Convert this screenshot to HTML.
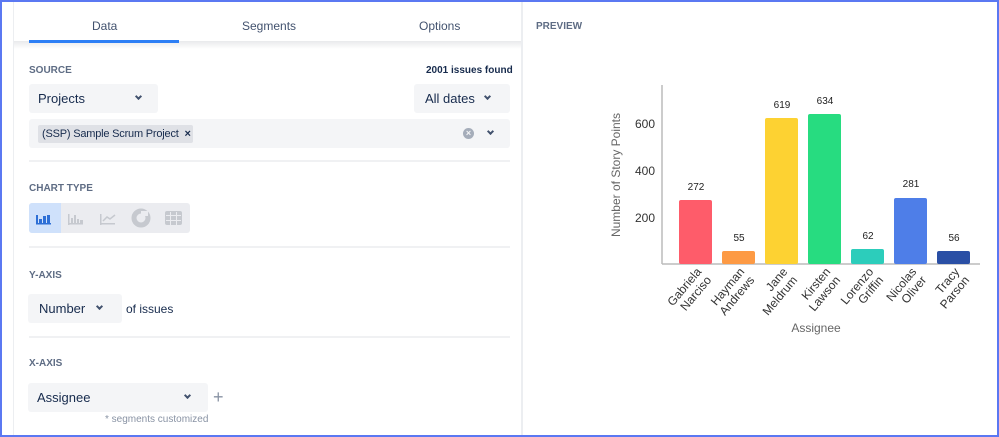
<!DOCTYPE html>
<html><head><style>
*{box-sizing:border-box;margin:0;padding:0}
body{width:999px;height:437px;overflow:hidden;background:#fff;font-family:"Liberation Sans",sans-serif;color:#172b4d;position:relative}
.frame{position:absolute;left:0;top:0;width:999px;height:437px;border:2px solid #5b78f2;z-index:10;pointer-events:none}
.a{position:absolute}
.lbl{font-size:10px;font-weight:bold;color:#5e6c84}
.sel{background:#f4f5f7;border-radius:3px;font-size:13px;color:#172b4d}
.chev{position:absolute;width:6px;height:6px;border-right:2px solid #42526e;border-bottom:2px solid #42526e;transform:rotate(45deg)}
.hr{position:absolute;left:29px;width:481px;height:2px;background:#f0f1f3}
</style></head><body>
<div class="frame"></div>
<div class="a" style="left:13px;top:0;width:1px;height:437px;background:#eceef1"></div>
<div class="a" style="left:521px;top:0;width:2px;height:437px;background:#eceef1"></div>
<div class="a" style="left:14px;top:41px;width:507px;height:8px;background:linear-gradient(#e9eaec,#fff)"></div>
<div class="a" style="left:29px;top:40px;width:150px;height:3px;background:#2d7ff5"></div>
<div class="a" style="left:92px;top:19px;font-size:12px;color:#42526e">Data</div>
<div class="a" style="left:242px;top:19px;font-size:12px;color:#42526e">Segments</div>
<div class="a" style="left:419px;top:19px;font-size:12px;color:#42526e">Options</div>
<div class="a lbl" style="left:29px;top:65px">SOURCE</div>
<div class="a" style="left:426px;top:65px;font-size:10px;font-weight:bold;color:#172b4d">2001 issues found</div>
<div class="a sel" style="left:29px;top:84px;width:129px;height:29px"><span class="a" style="left:9px;top:7px">Projects</span><i class="chev" style="left:107px;top:10px;width:5px;height:5px"></i></div>
<div class="a sel" style="left:414px;top:84px;width:96px;height:29px"><span class="a" style="left:11px;top:7px">All dates</span><i class="chev" style="left:71px;top:10px;width:5px;height:5px"></i></div>
<div class="a sel" style="left:29px;top:119px;width:481px;height:29px">
 <div class="a" style="left:9px;top:6px;width:155px;height:18px;background:#dfe1e6;border-radius:2px;font-size:11px;padding:3px 4px;white-space:nowrap;letter-spacing:-0.2px">(SSP) Sample Scrum Project <b style="margin-left:3px">×</b></div>
 <div class="a" style="left:434px;top:9px;width:11px;height:11px;border-radius:50%;background:#a5adba;color:#f4f5f7;font-size:9px;line-height:11px;text-align:center;font-weight:bold">×</div>
 <i class="chev" style="left:459px;top:10px;width:5px;height:5px"></i>
</div>
<div class="hr" style="top:160px"></div>
<div class="a lbl" style="left:29px;top:183px">CHART TYPE</div>
<div class="a" style="left:29px;top:203px;width:161px;height:30px;background:#ebecf0;border-radius:3px"></div>
<div class="a" style="left:29px;top:203px;width:32px;height:30px;background:#cfe1fb;border-radius:3px 0 0 3px"></div>
<svg class="a" style="left:29px;top:203px" width="161" height="30">
<g fill="#2d6fd6"><rect x="7" y="12" width="2" height="9"/><rect x="10" y="16" width="3" height="4"/><rect x="14" y="13" width="3" height="7"/><rect x="18" y="12" width="3" height="8"/><rect x="7" y="20" width="15" height="1.5"/></g>
<g fill="#c6c9cf"><rect x="39" y="11" width="1.5" height="11"/><rect x="39" y="20" width="15" height="1.5"/><rect x="42" y="15" width="2" height="5"/><rect x="45" y="12" width="2" height="8"/><rect x="48" y="16" width="2" height="4"/><rect x="51" y="17" width="3" height="3"/>
<rect x="71" y="11" width="1.5" height="11"/><rect x="71" y="20" width="15" height="1.5"/></g>
<polyline points="74,18 78,14 81,16 86,12" fill="none" stroke="#c6c9cf" stroke-width="1.5"/>
<circle cx="112" cy="15" r="7" fill="none" stroke="#c6c9cf" stroke-width="5"/>
<rect x="112" y="8" width="7" height="5" fill="#ebecf0"/>
<g fill="#c6c9cf"><rect x="136" y="8" width="17" height="14" rx="2"/></g>
<g fill="#ebecf0"><rect x="141" y="9" width="1" height="13"/><rect x="147" y="9" width="1" height="13"/><rect x="137" y="12" width="15" height="1"/><rect x="137" y="17" width="15" height="1"/></g>
</svg>
<div class="hr" style="top:246px"></div>
<div class="a lbl" style="left:29px;top:270px">Y-AXIS</div>
<div class="a sel" style="left:28px;top:294px;width:94px;height:29px"><span class="a" style="left:11px;top:7px">Number</span><i class="chev" style="left:69px;top:10px;width:5px;height:5px"></i></div>
<div class="a" style="left:126px;top:302px;font-size:12px">of issues</div>
<div class="hr" style="top:336px"></div>
<div class="a lbl" style="left:29px;top:358px">X-AXIS</div>
<div class="a sel" style="left:28px;top:383px;width:180px;height:29px"><span class="a" style="left:9px;top:7px">Assignee</span><i class="chev" style="left:157px;top:10px;width:5px;height:5px"></i></div>
<div class="a" style="left:213px;top:387px;font-size:18px;color:#8993a4">+</div>
<div class="a" style="left:105px;top:414px;font-size:10px;color:#8993a4">* segments customized</div>
<div class="a lbl" style="left:536px;top:21px">PREVIEW</div>
<svg class="a" style="left:0;top:0" width="999" height="437" font-family="Liberation Sans, sans-serif">
<line x1="662" y1="85" x2="662" y2="264" stroke="#bbb" stroke-width="1.5"/>
<line x1="662" y1="264" x2="980" y2="264" stroke="#bbb" stroke-width="1.5"/>
<g font-size="12" fill="#333" text-anchor="end"><text x="655" y="128">600</text><text x="655" y="175">400</text><text x="655" y="222">200</text></g>
<text transform="translate(620,175) rotate(-90)" font-size="12" fill="#666" text-anchor="middle">Number of Story Points</text>
<g>
<rect x="679" y="200" width="33" height="64" rx="2" fill="#fe5c6a"/>
<rect x="722" y="251" width="33" height="13" rx="2" fill="#fd9a44"/>
<rect x="765" y="118" width="33" height="146" rx="2" fill="#fdd232"/>
<rect x="808" y="114" width="33" height="150" rx="2" fill="#27dc80"/>
<rect x="851" y="249" width="33" height="15" rx="2" fill="#2ccdbb"/>
<rect x="894" y="198" width="33" height="66" rx="2" fill="#4e7ee8"/>
<rect x="937" y="251" width="33" height="13" rx="2" fill="#2a4fa5"/>
</g>
<g font-size="10" fill="#222" text-anchor="middle">
<text x="696" y="190">272</text><text x="739" y="241">55</text><text x="782" y="108">619</text><text x="825" y="104">634</text><text x="868" y="239">62</text><text x="911" y="187">281</text><text x="954" y="241">56</text>
</g>
<g font-size="12" fill="#333" text-anchor="end">
<g transform="translate(702,272) rotate(-50)"><text x="0" y="0">Gabriela</text><text x="0" y="13">Narciso</text></g>
<g transform="translate(745,272) rotate(-50)"><text x="0" y="0">Hayman</text><text x="0" y="13">Andrews</text></g>
<g transform="translate(788,272) rotate(-50)"><text x="0" y="0">Jane</text><text x="0" y="13">Meldrum</text></g>
<g transform="translate(831,272) rotate(-50)"><text x="0" y="0">Kirsten</text><text x="0" y="13">Lawson</text></g>
<g transform="translate(874,272) rotate(-50)"><text x="0" y="0">Lorenzo</text><text x="0" y="13">Griffin</text></g>
<g transform="translate(917,272) rotate(-50)"><text x="0" y="0">Nicolas</text><text x="0" y="13">Oliver</text></g>
<g transform="translate(960,272) rotate(-50)"><text x="0" y="0">Tracy</text><text x="0" y="13">Parson</text></g>
</g>
<text x="816" y="332" font-size="12" fill="#666" text-anchor="middle">Assignee</text>
</svg>
</body></html>
